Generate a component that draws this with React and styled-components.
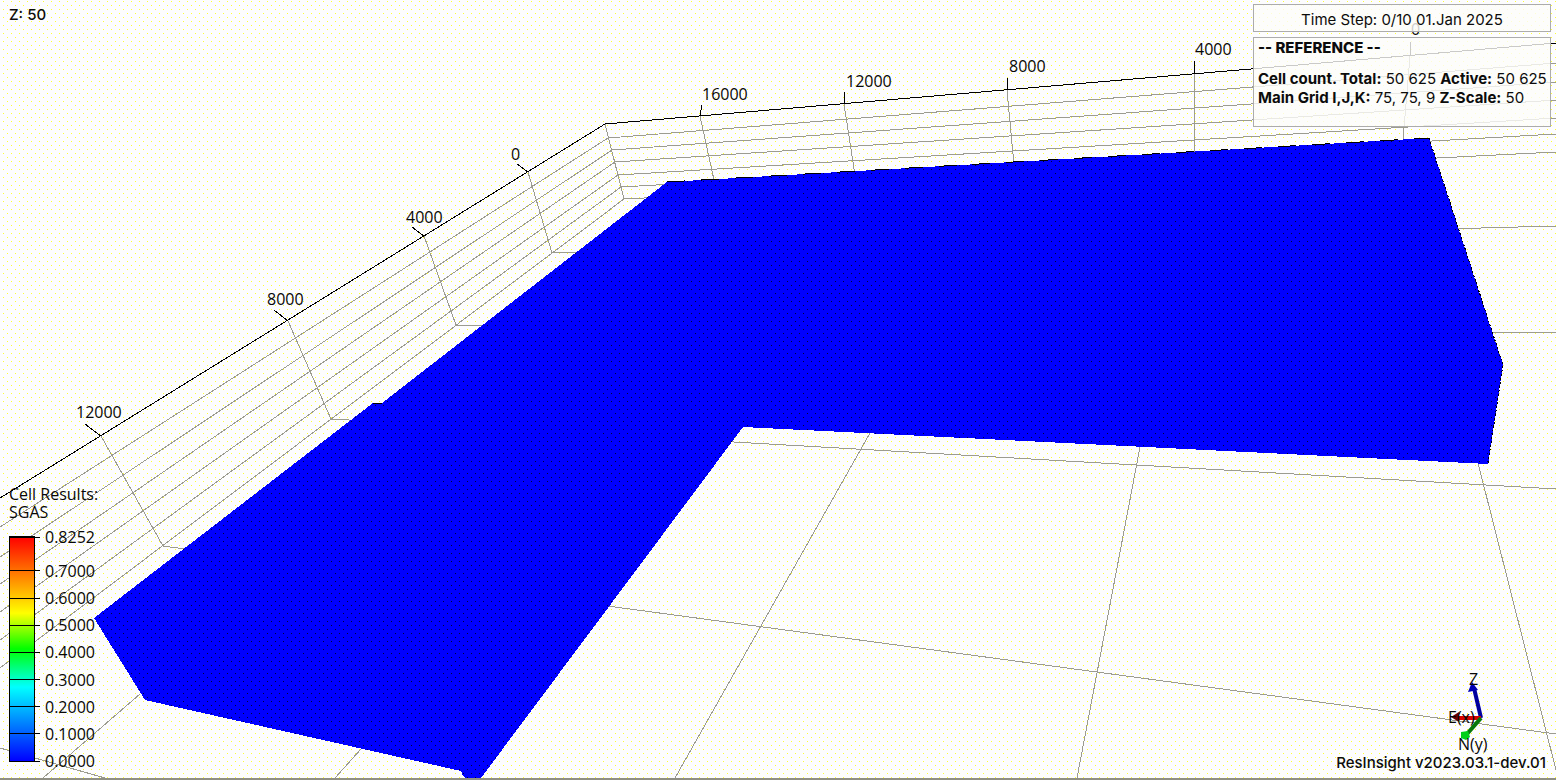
import React from "react";
import styled, { createGlobalStyle } from "styled-components";

const GlobalStyle = createGlobalStyle`
  * { box-sizing: border-box; }
  body { margin: 0; background: #fdfdfe; }
`;

const UI_FONT = `Inter, "Liberation Sans", sans-serif`;
const SCENE_FONT = `"Open Sans", "Noto Sans", sans-serif`;

const Viewport = styled.main`
  position: relative;
  display: flex;
  flex-direction: column;
  justify-content: space-between;
  min-height: 100vh;
  overflow: hidden;
  color: #0c0c0c;
  font-family: ${UI_FONT};
  font-size: 15px;
  line-height: 19px;
  border-bottom: 2px solid #8f8f84;
`;

const Scene = styled.svg`
  position: absolute;
  inset: 0;
  width: 100%;
  height: 100vh;
`;

const GridLine = styled.path`
  fill: none;
  stroke: #9c9c90;
  shape-rendering: crispEdges;
`;

const AxisLine = styled(GridLine)`
  stroke: #000;
`;

const AxisLabel = styled.text`
  font-family: ${SCENE_FONT};
  font-size: 16px;
  fill: #080808;
`;

const Row = styled.div`
  position: relative;
  display: flex;
  justify-content: space-between;
  align-items: ${(p) => p.$align};
  padding: ${(p) => p.$pad};
`;

const ScaleNote = styled.div`
  padding-top: 1px;
  font-weight: 500;
`;

const Panels = styled.div`
  display: flex;
  flex-direction: column;
  gap: 5px;
  width: 298px;
`;

const Panel = styled.section`
  border: 1px solid #acacac;
  background: rgba(253, 253, 250, 0.8);
  white-space: nowrap;
`;

const TimeStep = styled(Panel)`
  height: 28px;
  padding-top: 1px;
  line-height: 28px;
  text-align: center;
`;

const Details = styled(Panel)`
  height: 90px;
  padding: 0 4px;
`;

const DetailsTitle = styled.h1`
  margin: 0 0 12px;
  font-size: 15px;
  line-height: 19px;
  font-weight: 800;
`;

const Detail = styled.p`
  margin: 0;
`;

const Legend = styled.section`
  margin-bottom: 10px;
  font-family: ${SCENE_FONT};
  font-size: 16px;
  color: #080808;
`;

const LegendTitle = styled.h2`
  margin: 0 0 15px;
  font-size: 16px;
  font-weight: 400;
  line-height: 18px;
`;

const ColorScale = styled.ul`
  display: grid;
  grid-template-rows: minmax(0, 125fr) repeat(7, minmax(0, 100fr)) 0;
  width: 26px;
  height: 226px;
  margin: 0;
  padding: 0;
  list-style: none;
  border: 1px solid #000;
  background: linear-gradient(#f00, #ff0 34%, #0f0 50%, #0ff 67%, #00f);
`;

const ScaleMark = styled.li`
  display: flex;
  align-items: center;
  gap: 5px;
  height: 0;
  line-height: 18px;

  &::before {
    content: "";
    flex: none;
    width: 30px;
    height: 1px;
    background: #000;
  }
`;

const Version = styled.footer`
  font-weight: 500;
`;

const gridLines = [
  // left wall, layers
  "M608 138L0 527", "M612 150L0 557", "M615 162L0 584", "M618 175L0 612", "M621 187L0 640", "M624 199L0 668",
  // left wall, uprights
  "M605 124L624 199", "M528 172L552 253", "M424 236L456 325", "M288 321L331 419", "M101 436L163 546",
  // back wall, layers
  "M608 138L1556 63", "M612 150L1556 82", "M615 162L1556 100", "M618 175L1556 118", "M621 187L1556 134", "M624 199L1556 152",
  // back wall, uprights
  "M700 116L714 180", "M844 104L855 175", "M1007 90L1014 165", "M1194 74L1194 155", "M1410 56L1403 140",
  // floor
  "M552 253L1556 226", "M456 325L1556 333", "M331 419L1556 489", "M163 546L1556 734", "M0 748L105 778",
  "M140 694L43 778", "M361 749L335 778", "M870 433L675 778", "M1140 447L1077 778", "M1478 463L1558 778",
];

const axisLines = [
  "M0 498L605 124L1556 43",
  "M85 424L101 436", "M274 310L288 321", "M412 227L424 236", "M517 164L528 172",
  "M702 105L700 116", "M845 92L844 104", "M1008 78L1007 90", "M1195 61L1194 74", "M1411 42L1410 56",
];

const axisLabels = [
  [76, 418, "12000"], [267, 305, "8000"], [406, 223, "4000"], [511, 160, "0"],
  [702, 100, "16000"], [846, 87, "12000"], [1009, 72, "8000"], [1195, 55, "4000"], [1411, 35, "0"],
];

const marks = ["0.8252", "0.7000", "0.6000", "0.5000", "0.4000", "0.3000", "0.2000", "0.1000", "0.0000"];

function Stipple({ id, base, dot }) {
  return (
    <pattern id={id} width="8" height="8" patternUnits="userSpaceOnUse">
      <rect width="8" height="8" fill={base} />
      <rect x="3" y="1" width="1" height="1" fill={dot} />
      <rect x="7" y="5" width="1" height="1" fill={dot} />
    </pattern>
  );
}

function ReservoirScene() {
  return (
    <Scene viewBox="0 0 1556 780" preserveAspectRatio="xMidYMid slice" role="img" aria-label="Reservoir grid">
      <defs>
        <Stipple id="paper" base="#fdfdfe" dot="#ffff33" />
        <Stipple id="cells" base="#0000fe" dot="#000033" />
      </defs>
      <rect width="1556" height="780" fill="url(#paper)" />
      {gridLines.map((d) => <GridLine key={d} d={d} />)}
      {axisLines.map((d) => <AxisLine key={d} d={d} />)}
      <path
        d="M667 182L1429 138L1503 365L1488 464L743 427L481 778H466L463 776L461 771L145 700L94 618L373 403H382Z"
        fill="url(#cells)"
        shapeRendering="crispEdges"
      />
      <AxisLine d="M373 403H382M667 182L1429 138" strokeDasharray="18 16" />
      <AxisLine d="M1429 138L1503 365L1488 463" strokeDasharray="2 2" />
      {axisLabels.map(([x, y, label]) => <AxisLabel key={`${x}`} x={x} y={y}>{label}</AxisLabel>)}
    </Scene>
  );
}

function Orientation() {
  return (
    <g>
      <path d="M1481 718L1474 688" stroke="#00009c" strokeWidth="4" />
      <path d="M1472 682L1478 690L1468 692Z" fill="#0000b4" />
      <path d="M1481 718H1458" stroke="#d80000" strokeWidth="4" />
      <path d="M1451 717L1459 712V722Z" fill="#6c0000" />
      <path d="M1481 718L1467 734" stroke="#087808" strokeWidth="4" />
      <path d="M1461 732L1468 731L1470 737L1466 740L1461 738Z" fill="#00d018" />
      <AxisLabel x="1469" y="685">Z</AxisLabel>
      <AxisLabel x="1448" y="723">E(x)</AxisLabel>
      <AxisLabel x="1458" y="750">N(y)</AxisLabel>
    </g>
  );
}

export default function App() {
  return (
    <Viewport>
      <GlobalStyle />
      <ReservoirScene />
      <Scene viewBox="0 0 1556 780" preserveAspectRatio="xMaxYMax meet" role="img" aria-label="View orientation">
        <Orientation />
      </Scene>
      <Row $align="flex-start" $pad="4px 5px 0 9px">
        <ScaleNote>Z: 50</ScaleNote>
        <Panels>
          <TimeStep>Time Step: 0/10 01.Jan 2025</TimeStep>
          <Details>
            <DetailsTitle>-- REFERENCE --</DetailsTitle>
            <Detail><b>Cell count. Total:</b> 50 625 <b>Active:</b> 50 625</Detail>
            <Detail><b>Main Grid I,J,K:</b> 75, 75, 9 <b>Z-Scale:</b> 50</Detail>
          </Details>
        </Panels>
      </Row>
      <Row $align="flex-end" $pad="0 10px 6px 9px">
        <Legend>
          <LegendTitle>Cell Results:<br />SGAS</LegendTitle>
          <ColorScale>
            {marks.map((m) => <ScaleMark key={m}>{m}</ScaleMark>)}
          </ColorScale>
        </Legend>
        <Version>ResInsight v2023.03.1-dev.01</Version>
      </Row>
    </Viewport>
  );
}
